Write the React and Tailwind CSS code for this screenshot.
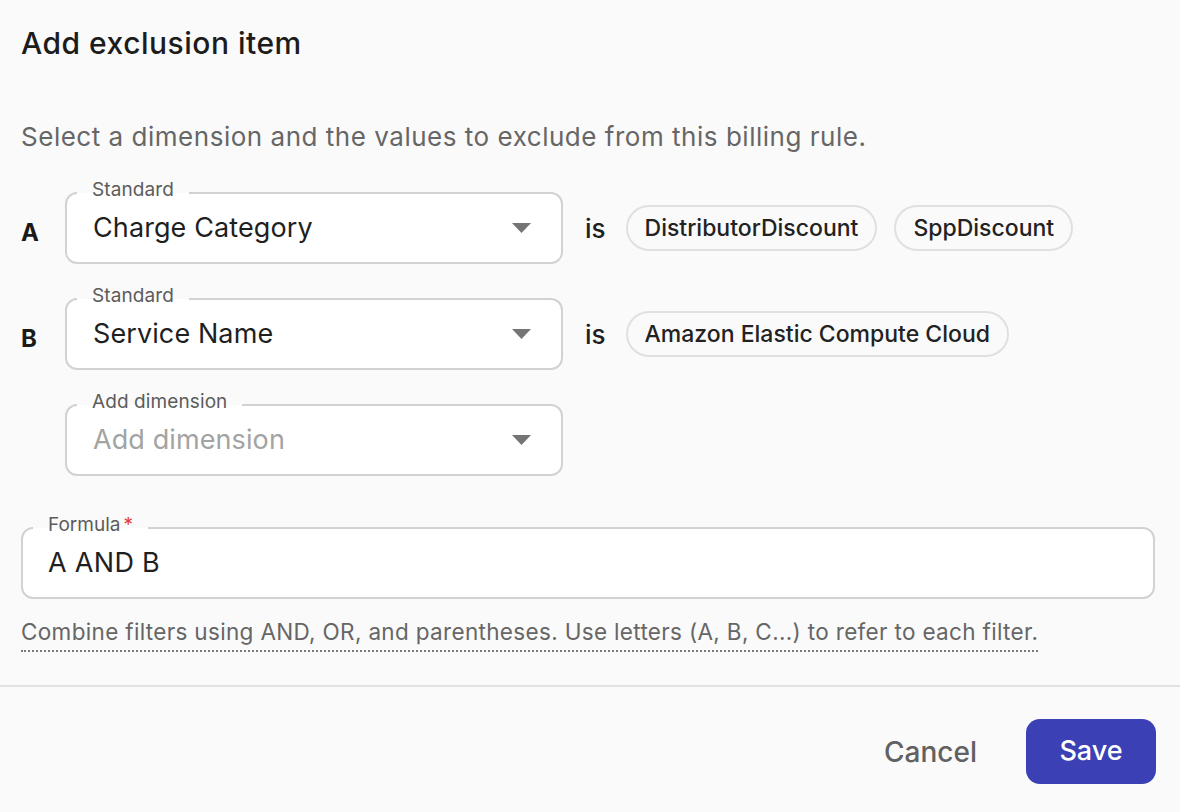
import React from "react";

function Arrow() {
  return (
    <svg width="19" height="10" viewBox="0 0 19 10" className="shrink-0">
      <polygon points="0,0 19,0 9.5,10" fill="#757575" />
    </svg>
  );
}

function SelectBox({ label, value, placeholder }) {
  return (
    <div className="relative flex h-[72px] w-[498px] items-center justify-between rounded-[12px] border-2 border-[#d2d2d2] bg-white pl-[26px] pr-[30px]">
      <span className="absolute left-[10px] top-[-15px] bg-[linear-gradient(to_bottom,#fafafa_0,#fafafa_14px,#ffffff_14px)] px-[15px] text-[19px] leading-[22px] tracking-[0.1px] text-[#5c5c5c]">
        {label}
      </span>
      <span className={"text-[27px] leading-[32px] tracking-[0.1px] " + (placeholder ? "text-[#a3a3a3]" : "text-[#1f1f1f]")}>
        {value}
      </span>
      <Arrow />
    </div>
  );
}

function Chip({ children }) {
  return (
    <span className="flex h-[46px] items-center rounded-full border-2 border-[#e0e0e0] px-[17px] text-[23px] font-medium text-[#222]">
      {children}
    </span>
  );
}

export default function App() {
  return (
    <div
      className="flex h-[812px] w-[1180px] flex-col bg-[#fafafa]"
      style={{ fontFamily: "Inter, 'Noto Sans', sans-serif" }}
    >
      <div className="px-[21px]">
        <h1 className="pt-[25px] text-[30px] font-medium leading-[36px] tracking-[0.5px] text-[#1c1c1c]">
          Add exclusion item
        </h1>
        <p className="mt-[60px] text-[26px] leading-[32px] tracking-[0.52px] text-[#666666]">
          Select a dimension and the values to exclude from this billing rule.
        </p>

        <div className="mt-[39px] flex flex-col gap-[34px]">
          <div className="flex items-center">
            <span className="w-[44px] pt-[9px] text-[24px] font-bold text-[#1a1a1a]">A</span>
            <SelectBox label="Standard" value="Charge Category" />
            <span className="ml-[22px] mr-[20px] text-[26px] font-medium text-[#1f1f1f]">is</span>
            <div className="flex gap-[17px]">
              <Chip>DistributorDiscount</Chip>
              <Chip>SppDiscount</Chip>
            </div>
          </div>
          <div className="flex items-center">
            <span className="w-[44px] pt-[9px] text-[24px] font-bold text-[#1a1a1a]">B</span>
            <SelectBox label="Standard" value="Service Name" />
            <span className="ml-[22px] mr-[20px] text-[26px] font-medium text-[#1f1f1f]">is</span>
            <div className="flex gap-[17px]">
              <Chip>Amazon Elastic Compute Cloud</Chip>
            </div>
          </div>
          <div className="flex items-center pl-[44px]">
            <SelectBox label="Add dimension" value="Add dimension" placeholder />
          </div>
        </div>

        <div className="relative mt-[51px] flex h-[72px] w-[1134px] items-center rounded-[12px] border-2 border-[#d2d2d2] bg-white pl-[25px]">
          <span className="absolute left-[10px] top-[-15px] bg-[linear-gradient(to_bottom,#fafafa_0,#fafafa_14px,#ffffff_14px)] px-[15px] text-[19px] leading-[22px] text-[#5c5c5c]">
            Formula<span className="ml-[3px] text-[#e53935]">*</span>
          </span>
          <span className="text-[27px] leading-[32px] tracking-[0.3px] text-[#1f1f1f]">A AND B</span>
        </div>

        <div className="mt-[19px]">
          <span className="inline-block border-b-2 border-dotted border-[#7a7a7a] pb-[4px] text-[22.5px] leading-[28px] tracking-[0.33px] text-[#666666]">
            Combine filters using AND, OR, and parentheses. Use letters (A, B, C...) to refer to each filter.
          </span>
        </div>
      </div>

      <div className="mt-[33px] h-[2px] w-full bg-[#e2e2e2]" />

      <div className="mt-[32px] flex items-center justify-end gap-[49px] pr-[24px]">
        <button className="text-[28px] font-medium text-[#616161]">Cancel</button>
        <button className="flex h-[65px] w-[130px] items-center justify-center rounded-[14px] bg-[#3b40b4] text-[27px] font-medium text-white">
          Save
        </button>
      </div>
    </div>
  );
}
